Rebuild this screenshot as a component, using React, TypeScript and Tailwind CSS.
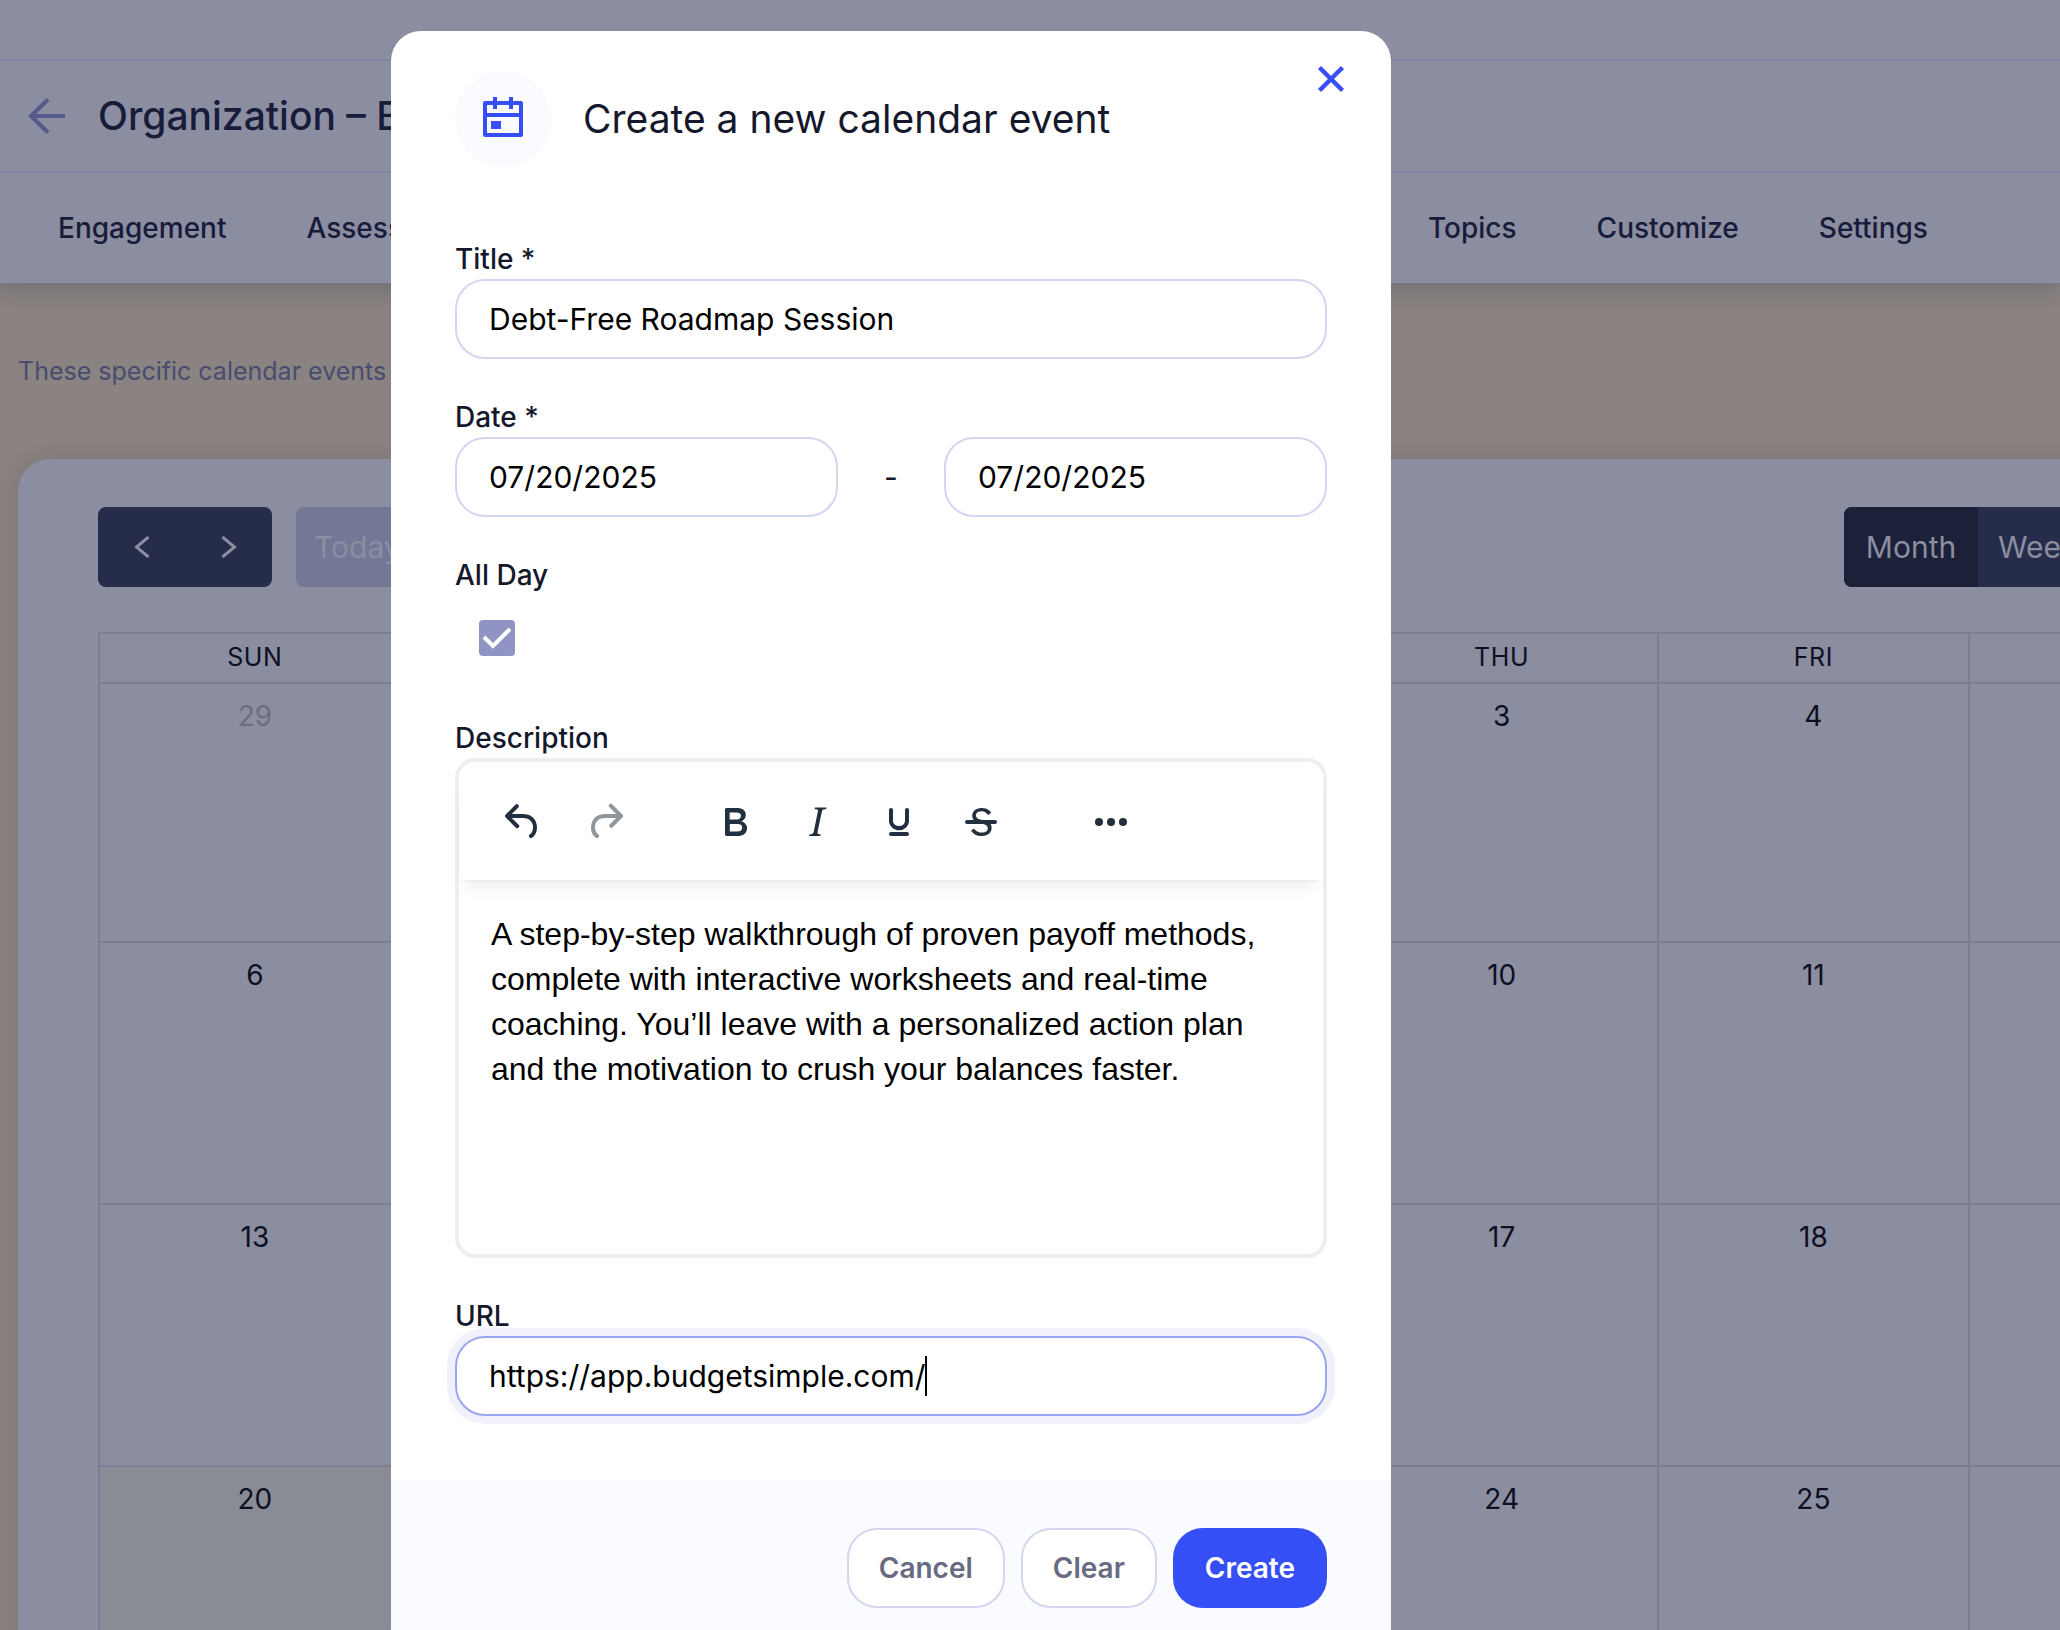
import { useState } from "react";
import type { ComponentProps, ReactNode } from "react";

const DAYS = ["Sun", "Mon", "Tue", "Wed", "Thu", "Fri", "Sat"];

const WEEKS = [
  [29, 30, 1, 2, 3, 4, 5],
  [6, 7, 8, 9, 10, 11, 12],
  [13, 14, 15, 16, 17, 18, 19],
  [20, 21, 22, 23, 24, 25, 26],
];

const DESCRIPTION =
  "A step-by-step walkthrough of proven payoff methods, complete with interactive worksheets and real-time coaching. You’ll leave with a personalized action plan and the motivation to crush your balances faster.";

function PageHeader() {
  return (
    <header className="relative bg-[#8b8da0] text-[#191b3a] shadow-[0_4px_24px_#14183c40]">
      <div className="h-[61px] border-b-2 border-[#8386a1]" />
      <div className="flex h-28 items-center gap-8 border-b-2 border-[#8386a1] pl-7">
        <a href="#back" aria-label="Back">
          <svg viewBox="0 0 38 36" className="h-9 w-[38px]" fill="none" stroke="#54598a" strokeWidth="4">
            <path d="M37 18H3M20 1.5 3 18l17 16.5" />
          </svg>
        </a>
        <h1 className="text-[39px] font-medium whitespace-nowrap">Organization – Budget</h1>
      </div>
      <nav className="flex h-[110px] items-center pl-[58px] text-[28px] font-medium">
        <div className="flex w-[1370px] shrink-0 gap-20">
          <a href="#engagement">Engagement</a>
          <a href="#assessments">Assessments</a>
        </div>
        <div className="flex gap-20">
          <a href="#topics">Topics</a>
          <a href="#customize">Customize</a>
          <a href="#settings">Settings</a>
        </div>
      </nav>
    </header>
  );
}

function CalendarToolbar() {
  return (
    <div className="flex h-20 items-stretch text-[30px] text-[#8b8da0]">
      <div className="flex w-[174px] rounded-lg bg-[#252d4b]">
        <button type="button" aria-label="Previous month" className="flex flex-1 items-center justify-center">
          <svg viewBox="0 0 16 22" className="h-[22px] w-4" fill="none" stroke="currentColor" strokeWidth="3">
            <path d="M14.500 1 2.500 11l12 10" />
          </svg>
        </button>
        <button type="button" aria-label="Next month" className="flex flex-1 items-center justify-center">
          <svg viewBox="0 0 16 22" className="h-[22px] w-4" fill="none" stroke="currentColor" strokeWidth="3">
            <path d="m1.500 1 12 10-12 10" />
          </svg>
        </button>
      </div>
      <button type="button" className="ml-6 rounded-lg bg-[#747896] px-[18px]">
        Today
      </button>
      <div className="ml-auto flex w-[438px] overflow-hidden rounded-lg bg-[#252d4b]">
        <button type="button" className="w-[134px] bg-[#1c2039]">
          Month
        </button>
        <button type="button" className="px-5">
          Week
        </button>
        <button type="button" className="px-5">
          Day
        </button>
      </div>
    </div>
  );
}

function Calendar() {
  return (
    <section className="-mr-[302px] ml-[18px] rounded-[32px] bg-[#8b8da0] px-20 py-12 shadow-[0_0_24px_#14183c20]">
      <CalendarToolbar />
      <table className="mt-[45px] w-full table-fixed border-collapse text-[#0e1022]">
        <thead>
          <tr className="h-[50px]">
            {DAYS.map((day) => (
              <th key={day} className="border-2 border-[#7c7e93] text-[25px] font-normal tracking-wide uppercase">
                {day}
              </th>
            ))}
          </tr>
        </thead>
        <tbody>
          {WEEKS.map((week, row) => (
            <tr key={week[0]} className={row === 0 ? "h-[259px]" : "h-[262px]"}>
              {week.map((date, col) => (
                <td
                  key={date}
                  className={`border-2 border-[#7c7e93] pt-3 text-center align-top text-[28px] leading-10 ${
                    date === 20 ? "bg-[#898c94]" : ""
                  } ${row === 0 && col < 2 ? "text-[#6b6d82]" : ""}`}
                >
                  {date}
                </td>
              ))}
            </tr>
          ))}
        </tbody>
      </table>
    </section>
  );
}

function Label({ htmlFor, children }: { htmlFor: string; children: ReactNode }) {
  return (
    <label htmlFor={htmlFor} className="block text-[28px] leading-10 font-medium text-[#15182b]">
      {children}
    </label>
  );
}

function TextInput(props: ComponentProps<"input">) {
  return (
    <input
      type="text"
      className="h-20 w-full min-w-0 rounded-[30px] border-2 border-[#d3d6ef] bg-white px-8 text-[30px] text-black outline-none"
      {...props}
    />
  );
}

function EditorButton({ label, disabled, children }: { label: string; disabled?: boolean; children: ReactNode }) {
  return (
    <button type="button" aria-label={label} disabled={disabled} className="disabled:opacity-50">
      <svg viewBox="0 0 24 24" className="size-12" fill="currentColor" fillRule="evenodd">
        {children}
      </svg>
    </button>
  );
}

function EditorToolbar() {
  return (
    <div className="flex h-[118px] items-center gap-[82px] rounded-t-2xl bg-white pt-0.5 pl-10 text-[#222f3e] shadow-[0_4px_4px_-4px_#222f3e1a,0_16px_16px_-8px_#222f3e12]">
      <div className="flex gap-[34px]">
        <EditorButton label="Undo">
          <path d="M6.4 8H12c3.7 0 6.2 2 6.8 5.1.6 2.7-.4 5.6-2.3 6.8a1 1 0 0 1-1-1.8c1.1-.6 1.8-2.7 1.4-4.6-.5-2.1-2.1-3.500-4.900-3.500H6.4l3.3 3.3a1 1 0 1 1-1.4 1.4l-5-5a1 1 0 0 1 0-1.4l5-5a1 1 0 0 1 1.4 1.4L6.4 8Z" />
        </EditorButton>
        <EditorButton label="Redo" disabled>
          <path d="M17.6 10H12c-2.8 0-4.4 1.4-4.9 3.5-.4 2 .3 4 1.4 4.6a1 1 0 1 1-1 1.8c-2-1.2-2.9-4.1-2.3-6.8.6-3 3-5.1 6.8-5.100h5.600l-3.300-3.300a1 1 0 1 1 1.400-1.400l5 5a1 1 0 0 1 0 1.400l-5 5a1 1 0 0 1-1.400-1.400l3.300-3.300Z" />
        </EditorButton>
      </div>
      <div className="flex gap-[34px]">
        <EditorButton label="Bold">
          <path d="M7.8 19c-.3 0-.5 0-.6-.2l-.2-.5V5.700c0-.2 0-.4.2-.5l.6-.2h5c1.500 0 2.700.3 3.500 1 .7.6 1.100 1.400 1.100 2.500a3 3 0 0 1-.6 1.900c-.4.6-1 1-1.600 1.200.4.1.9.3 1.300.6s.8.7 1 1.200c.4.4.5 1 .5 1.600 0 1.300-.4 2.300-1.300 3-.8.7-2.100 1-3.800 1H7.800Zm5-8.300c.6 0 1.200-.1 1.600-.5.4-.3.6-.7.6-1.300 0-1.100-.8-1.700-2.300-1.700H9.300v3.500h3.400Zm.5 6c.7 0 1.300-.1 1.700-.4.4-.4.6-.9.6-1.500s-.2-1-.7-1.400c-.4-.3-1-.4-2-.4H9.400v3.800h4Z" />
        </EditorButton>
        <EditorButton label="Italic">
          <path d="m16.700 4.700-.1.900h-.3c-.6 0-1 0-1.400.3-.3.3-.4.6-.5 1.100l-2.100 9.800v.6c0 .5.4.8 1.400.8h.2l-.2.8H8l.2-.8h.2c1.100 0 1.800-.5 2-1.500l2-9.800.1-.5c0-.6-.4-.8-1.400-.8h-.3l.2-.9h5.800Z" />
        </EditorButton>
        <EditorButton label="Underline">
          <path d="M16 5c.6 0 1 .4 1 1v5.500a4 4 0 0 1-.4 1.800l-1 1.400a5.300 5.300 0 0 1-5.500 1 5 5 0 0 1-1.600-1c-.5-.4-.8-.9-1.100-1.400a4 4 0 0 1-.4-1.800V6c0-.6.4-1 1-1s1 .4 1 1v5.500c0 .3 0 .6.2 1l.6.7a3.300 3.300 0 0 0 2.200.8 3.400 3.400 0 0 0 2.200-.8c.3-.2.4-.5.6-.8l.2-.9V6c0-.6.4-1 1-1ZM8 17h8c.6 0 1 .4 1 1s-.4 1-1 1H8a1 1 0 0 1 0-2Z" />
        </EditorButton>
        <EditorButton label="Strikethrough">
          <path d="M15.600 8.500c-.5-.7-1-1.100-1.300-1.300-.6-.4-1.300-.6-2-.6-2.700 0-2.800 1.700-2.800 2.100 0 1.600 1.800 2 3.200 2.300 4.400.9 4.600 2.800 4.600 3.900 0 1.400-.7 4.100-5 4.100A6.200 6.200 0 0 1 7 16.400l1.500-1.100c.4.6 1.600 2 3.700 2 1.600 0 2.500-.4 3-1.200.4-.8.3-2-.8-2.600-.7-.4-1.600-.7-2.900-1-1-.2-3.900-.8-3.900-3.600C7.600 6 10.300 5 12.400 5c2.900 0 4.200 1.600 4.700 2.400l-1.500 1.100Z" />
          <path d="M5 11h14a1 1 0 0 1 0 2H5a1 1 0 0 1 0-2Z" />
        </EditorButton>
      </div>
      <EditorButton label="More">
        <circle cx="6" cy="12" r="2" />
        <circle cx="12" cy="12" r="2" />
        <circle cx="18" cy="12" r="2" />
      </EditorButton>
    </div>
  );
}

function EventForm() {
  const [allDay, setAllDay] = useState(true);

  return (
    <form className="flex flex-col gap-[38px] px-16 pb-16">
      <div>
        <Label htmlFor="title">Title *</Label>
        <TextInput id="title" defaultValue="Debt-Free Roadmap Session" />
      </div>

      <div>
        <Label htmlFor="start">Date *</Label>
        <div className="flex items-center text-[30px] text-[#15182b]">
          <TextInput id="start" defaultValue="07/20/2025" />
          <span className="w-[106px] shrink-0 text-center">-</span>
          <TextInput aria-label="End date" defaultValue="07/20/2025" />
        </div>
      </div>

      <div>
        <Label htmlFor="all-day">All Day</Label>
        <div className="flex h-[85px] items-center pl-6">
          <div className="relative size-9">
            <input
              id="all-day"
              type="checkbox"
              checked={allDay}
              onChange={() => setAllDay(!allDay)}
              className="block size-9 appearance-none rounded border-2 border-[#8f94c4] checked:bg-[#8f94c4]"
            />
            {allDay && (
              <svg
                viewBox="0 0 36 36"
                className="pointer-events-none absolute inset-0"
                fill="none"
                stroke="white"
                strokeWidth="4"
              >
                <path d="m5 17 9 9L31 9" />
              </svg>
            )}
          </div>
        </div>
      </div>

      <div>
        <Label htmlFor="description">Description</Label>
        <div className="flex h-[500px] flex-col rounded-[20px] border-4 border-[#eee]">
          <EditorToolbar />
          <textarea
            id="description"
            defaultValue={DESCRIPTION}
            className="flex-1 resize-none px-8 pt-8 font-['Liberation_Sans',Arial,sans-serif] text-[32px] leading-[45px] text-black outline-none"
          />
        </div>
      </div>

      <div>
        <Label htmlFor="url">URL</Label>
        <div className="relative rounded-[30px] ring-8 ring-[#f0f1fa]">
          <input
            id="url"
            type="text"
            defaultValue="https://app.budgetsimple.com/"
            className="block h-20 w-full rounded-[30px] border-2 border-[#9aa5ee] bg-white px-8 text-[30px] text-black outline-none"
          />
          <span className="absolute top-5 left-[470px] h-10 w-0.5 bg-black" />
        </div>
      </div>
    </form>
  );
}

function EventModal() {
  return (
    <div role="dialog" aria-labelledby="modal-title" className="relative w-[1000px] rounded-[30px] bg-white">
      <button type="button" aria-label="Close" className="absolute top-[34px] right-[46px]">
        <svg viewBox="0 0 28 28" className="size-7" fill="none" stroke="#364ef5" strokeWidth="4.500">
          <path d="m2.500 2.500 23 23M25.500 2.500l-23 23" />
        </svg>
      </button>

      <div className="flex items-center gap-8 px-16 pt-10 pb-[72px]">
        <div className="flex size-24 items-center justify-center rounded-full bg-[#fafbff]">
          <svg viewBox="0 0 40 40" className="mb-1 size-10" fill="#364ef5" fillRule="evenodd">
            <path d="M2 4h8V0h4v4h12V0h4v4h8a2 2 0 0 1 2 2v32a2 2 0 0 1-2 2H2a2 2 0 0 1-2-2V6a2 2 0 0 1 2-2Zm2 4v8h32V8h-6v4h-4V8H14v4h-4V8H4Zm0 12v16h32V20H4Zm4 4h10v8H8v-8Z" />
          </svg>
        </div>
        <h2 id="modal-title" className="text-[39px] text-[#15182b]">
          Create a new calendar event
        </h2>
      </div>

      <EventForm />

      <div className="flex justify-end gap-4 rounded-b-[30px] bg-[#fafbff] px-16 py-12 text-[28px] font-semibold">
        <button type="button" className="h-20 rounded-[30px] border-2 border-[#d3d6ef] bg-white px-[30px] text-[#676a80]">
          Cancel
        </button>
        <button type="button" className="h-20 rounded-[30px] border-2 border-[#d3d6ef] bg-white px-[30px] text-[#676a80]">
          Clear
        </button>
        <button type="button" className="h-20 rounded-[30px] bg-[#364ef5] px-8 text-white">
          Create
        </button>
      </div>
    </div>
  );
}

export default function App() {
  return (
    <div className="relative h-screen overflow-hidden bg-[#8a8381] font-[Inter,sans-serif]">
      <PageHeader />
      <p className="h-44 pt-[70px] pl-[18px] text-[25px] leading-9 text-[#474c70]">
        These specific calendar events
      </p>
      <Calendar />
      <div className="absolute inset-0 flex items-start justify-center overflow-hidden pt-[31px] pr-[278px]">
        <EventModal />
      </div>
    </div>
  );
}
